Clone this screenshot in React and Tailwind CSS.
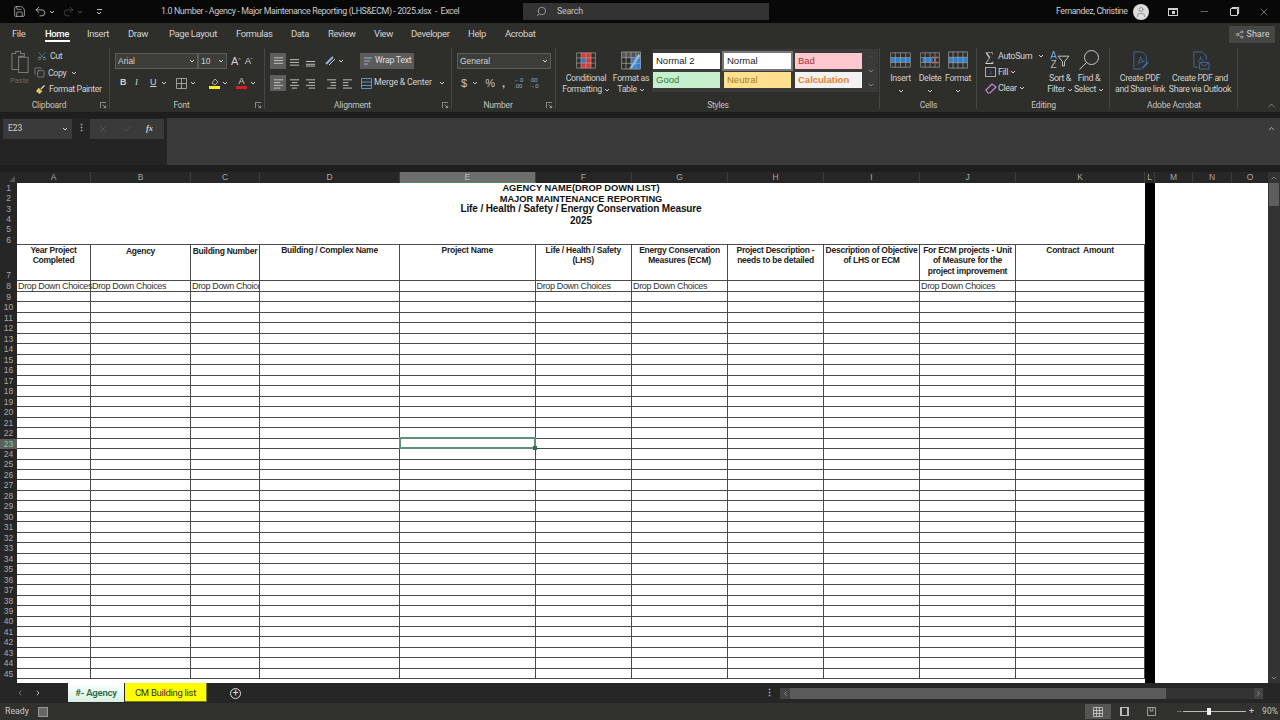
import React from "react";
import { Search, X, Minus, Scissors, Copy, ChevronDown, ChevronUp, ChevronLeft, ChevronRight, User, Share2, Save, Undo2, Redo2, Check } from "lucide-react";

const Caret = ({ c = "" }) => <svg viewBox="0 0 6 4" className={"w-[6px] h-[4px] shrink-0 " + c}><path d="M1 1l2 2 2-2" fill="none" stroke="currentColor" strokeWidth="1" /></svg>;
const Launcher = () => <svg viewBox="0 0 8 8" className="w-[7px] h-[7px] text-[#b8b8b8]"><path d="M.5 7V.5H7M3 3l3.5 3.5M6.5 4v2.5H4" fill="none" stroke="currentColor" strokeWidth=".8" /></svg>;

const Group = ({ w, label, launcher, children, noBorder }) => (
  <div className={`${w} h-[67px] shrink-0 flex flex-col relative`}>
    <div className="flex-1 min-h-0 flex">{children}</div>
    <div className={`h-[15px] flex items-center justify-center text-[8.5px] tracking-[-0.2px] text-[#c4c4c2] pt-[1px] ${launcher ? "pr-[12px]" : ""}`}>{label}</div>
    {launcher && <div className="absolute right-[3px] bottom-[3px]"><Launcher /></div>}
    {!noBorder && <div className="absolute right-0 top-[3px] bottom-[3px] w-px bg-[#454543]" />}
  </div>
);

const Lines = ({ rows, active }) => (
  <div className={`w-[16px] h-[16px] shrink-0 flex items-center justify-center ${active ? "bg-[#5e5e5c]" : ""}`}>
    <svg viewBox="0 0 12 12" className="w-[11px] h-[11px]">
      {rows.map((r, i) => <path key={i} d={`M${r[0]} ${r[2]}H${r[1]}`} stroke="#c8c8c8" strokeWidth="1" />)}
    </svg>
  </div>
);

const Tile = ({ cls, label, outer }) => (
  <div className={`w-[67px] h-[16px] shrink-0 flex items-center pl-[3px] text-[9.5px] font-['Liberation_Sans'] leading-none ${cls} ${outer || ""}`}>{label}</div>
);

const GridIcon = ({ children, w = 32, h = 20 }) => (
  <svg viewBox="0 0 32 20" width={w} height={h} preserveAspectRatio="none" className="shrink-0">
    {children}
    <path d="M1 1h30v18H1zM1 7h30M1 13h30M8 1v18M16 1v18M24 1v18" fill="none" stroke="#a8a8a8" strokeWidth=".9" />
  </svg>
);

const BigButton = ({ w, icon, l1, l2, caret1, caret2 }) => (
  <div className={`${w} shrink-0 flex flex-col items-center text-[8.8px] tracking-[-0.35px] leading-[11px] text-[#cfcfcd]`}>
    <div className="h-[20px] flex items-center justify-center">{icon}</div>
    <div className="mt-[3px] whitespace-nowrap flex items-center gap-[2px]">{l1}{caret1 && <Caret />}</div>
    <div className="whitespace-nowrap flex items-center gap-[2px] h-[11px]">{l2}{caret2 && <Caret />}</div>
  </div>
);

const cols = [74, 100, 69, 140, 135.5, 96.5, 96, 96, 96, 96, 129];
const colLetters = ["A", "B", "C", "D", "E", "F", "G", "H", "I", "J", "K"];
const headerText = [
  ["Year Project", "Completed"], ["Agency"], ["Building Number"], ["Building / Complex Name"], ["Project Name"],
  ["Life / Health / Safety", "(LHS)"], ["Energy Conservation", "Measures (ECM)"], ["Project Description -", "needs to be detailed"],
  ["Description of Objective", "of LHS or ECM"], ["For ECM projects - Unit", "of Measure for the", "project improvement"], ["Contract  Amount"],
];
const dd = { 0: 1, 1: 1, 2: 1, 5: 1, 6: 1, 9: 1 };
const tableCols = "grid grid-cols-[74px_100px_69px_140px_135.5px_96.5px_96px_96px_96px_96px_129px]";
const dataRows = Array.from({ length: 37 }, (_, i) => i + 9);
const sans = "font-['Liberation_Sans',Arial,sans-serif]";

export default function App() {
  return (
    <div className="w-[1280px] h-[720px] overflow-hidden flex flex-col bg-[#1f1f1f] text-[#d2d2d0] font-['Roboto','Noto_Sans',sans-serif]">
      {/* Title bar */}
      <div className="h-[23px] shrink-0 bg-[#080808] flex items-center">
        <div className="w-[161px] shrink-0 flex items-center pl-[13px] text-[#c8c8c8]">
          <Save size={13} strokeWidth={1.3} />
          <Undo2 size={13} strokeWidth={1.5} className="ml-[8px]" />
          <Caret c="ml-[2px]" />
          <Redo2 size={13} strokeWidth={1.3} className="ml-[7px] text-[#555]" />
          <Caret c="ml-[2px] text-[#555]" />
          <div className="ml-[13px] flex flex-col items-center gap-[1px]"><div className="w-[5px] h-px bg-[#bbb]" /><Caret /></div>
        </div>
        <div className="w-[362px] shrink-0 text-[8.9px] tracking-[-0.41px] whitespace-nowrap text-[#c9c9c9]">1.0 Number - Agency - Major Maintenance Reporting (LHS&amp;ECM) - 2025.xlsx&nbsp; -&nbsp; Excel</div>
        <div className="w-[246px] h-[17px] shrink-0 bg-[#333333] flex items-center pl-[13px] text-[8.8px] tracking-[-0.2px] text-[#c4c4c4]">
          <Search size={11} strokeWidth={1.4} className="-scale-x-100" />
          <span className="ml-[10px]">Search</span>
        </div>
        <div className="ml-[287px] text-[8.8px] tracking-[-0.4px] whitespace-nowrap w-[78px] shrink-0 text-[#cfcfcf]">Fernandez, Christine</div>
        <div className="w-[16px] h-[16px] shrink-0 rounded-full bg-[#dcdcdc] flex items-center justify-center ml-[-1px]"><User size={12} strokeWidth={1.4} className="text-[#777]" /></div>
        <div className="ml-[19px] w-[10px] h-[8px] border border-[#d0d0d0] border-t-2 flex items-center justify-center"><div className="w-[3px] h-[3px] bg-[#d0d0d0]" /></div>
        <Minus size={11} strokeWidth={1} className="ml-[21px]" />
        <div className="ml-[20px] w-[8px] h-[8px] border border-[#d0d0d0] rounded-[1px] shadow-[1.5px_-1.5px_0_-0.4px_#d0d0d0]" />
        <X size={12} strokeWidth={1.1} className="ml-[20px]" />
      </div>

      {/* Tabs */}
      <div className="h-[22px] shrink-0 bg-[#2e2e2b] flex items-center text-[9.5px] tracking-[-0.4px] pl-[12px] pt-[1px] relative">
        <span className="w-[33px]">File</span>
        <span className="w-[42px] text-white font-medium relative">Home<span className="absolute left-0 top-[13px] w-[25px] h-[2px] bg-white" /></span>
        <span className="w-[41px]">Insert</span>
        <span className="w-[41px]">Draw</span>
        <span className="w-[67px]">Page Layout</span>
        <span className="w-[55px]">Formulas</span>
        <span className="w-[37px]">Data</span>
        <span className="w-[46px]">Review</span>
        <span className="w-[37px]">View</span>
        <span className="w-[57px]">Developer</span>
        <span className="w-[37px]">Help</span>
        <span className="w-[40px]">Acrobat</span>
        <div className="ml-auto mr-[5px] w-[46px] h-[17px] bg-[#464644] flex items-center justify-center gap-[3px] text-[9px] tracking-normal rounded-[1px]">
          <Share2 size={9} strokeWidth={1.4} /><span>Share</span>
        </div>
      </div>

      {/* Ribbon */}
      <div className="h-[67px] shrink-0 bg-[#2e2e2b] flex">
        <Group w="w-[110px]" label="Clipboard" launcher>
          <div className="w-[32px] pl-[11px] pt-[5px] flex flex-col items-start text-[7.5px] text-[#6a6a68]">
            <svg viewBox="0 0 20 24" className="w-[19px] h-[24px]"><path d="M1 3h4V1h5v2h4v3H8v14H1zM8 7h10v16H8z" fill="none" stroke="#7a7a78" strokeWidth="1.1" /></svg>
            <span className="mt-[1px] ml-[-1px]">Paste</span>
          </div>
          <div className="flex-1 flex flex-col pt-[3px] pl-[2px] text-[8.8px] tracking-[-0.4px] leading-[16.5px]">
            <div className="flex items-center h-[16.5px] pl-[3px]"><Scissors size={10} strokeWidth={1.2} className="text-[#7fb0e0] -rotate-90" /><span className="ml-[3px]">Cut</span></div>
            <div className="flex items-center h-[16.5px]"><Copy size={11} strokeWidth={1} className="text-[#c8c8c8]" /><span className="ml-[3px]">Copy</span><Caret c="ml-[5px]" /></div>
            <div className="flex items-center h-[16.5px] pl-[1px]">
              <svg viewBox="0 0 12 12" className="w-[11px] h-[11px]"><path d="M1 8l3-4 4 4-3 3z" fill="#e8c25e" /><path d="M6 5l4-4 1 1-4 4z" fill="#dcdcdc" /></svg>
              <span className="ml-[3px] whitespace-nowrap">Format Painter</span>
            </div>
          </div>
        </Group>

        <Group w="w-[155px]" label="Font" launcher>
          <div className="pl-[5px] pt-[8px] flex flex-col">
            <div className="flex items-center text-[8.5px]">
              <div className="w-[83px] h-[16px] border border-[#5c5c5a] bg-[#3d3d3a] flex items-center justify-between px-[2px] font-['Liberation_Sans']">Arial<Caret /></div>
              <div className="w-[29px] h-[16px] border border-[#5c5c5a] bg-[#3d3d3a] flex items-center justify-between px-[2px] font-['Liberation_Sans']">10<Caret /></div>
              <span className="ml-[4px] text-[11px] font-['Liberation_Sans'] leading-none">A<sup className="text-[5px]">^</sup></span>
              <span className="ml-[4px] text-[9.5px] font-['Liberation_Sans'] leading-none">A<sup className="text-[5px]">ˇ</sup></span>
            </div>
            <div className="flex items-center mt-[6px] pl-[5px] text-[9px] h-[16px] font-['Liberation_Sans']">
              <span className="font-bold w-[15px]">B</span>
              <span className="italic w-[15px] font-['Liberation_Serif']">I</span>
              <span className="underline w-[11px]">U</span><Caret />
              <svg viewBox="0 0 11 11" className="w-[11px] h-[11px] ml-[9px]"><path d="M.5.5h10v10H.5zM5.5.5v10M.5 5.5h10" fill="none" stroke="#b8b8b8" strokeWidth=".8" /></svg>
              <Caret c="ml-[3px]" />
              <div className="ml-[13px] w-[11px] flex flex-col items-center"><svg viewBox="0 0 10 8" className="w-[10px] h-[8px]"><path d="M2 5l3-4 3 3-3 3z" fill="none" stroke="#ccc" strokeWidth=".8" /></svg><div className="w-[11px] h-[3px] bg-[#f4ee1a]" /></div>
              <Caret c="ml-[2px]" />
              <div className="ml-[8px] w-[11px] flex flex-col items-center text-[9px] leading-[8px]"><span>A</span><div className="w-[11px] h-[3px] bg-[#d81e1e] mt-[1px]" /></div>
              <Caret c="ml-[3px]" />
            </div>
          </div>
        </Group>

        <Group w="w-[187px]" label="Alignment" launcher>
          <div className="pl-[5px] pt-[8px] flex flex-col gap-[6px]">
            <div className="flex items-center h-[16px]">
              <Lines active rows={[[1, 11, 2], [1, 11, 5], [1, 11, 8]]} />
              <Lines rows={[[1, 11, 4], [1, 11, 7], [1, 11, 10]]} />
              <Lines rows={[[1, 11, 6], [1, 11, 9], [1, 11, 11]]} />
              <svg viewBox="0 0 12 12" className="w-[12px] h-[12px] ml-[6px] shrink-0"><path d="M2 9l7-7" stroke="#8fb3d9" strokeWidth="2" /><path d="M5 10l6-6" stroke="#cccccc" strokeWidth="1" /></svg>
              <Caret c="ml-[2px]" />
              <div className="ml-[16px] w-[54px] h-[16px] bg-[#5b5b59] flex items-center text-[8.8px] tracking-[-0.3px] pl-[3px] whitespace-nowrap text-[#dedede]">
                <svg viewBox="0 0 10 10" className="w-[10px] h-[10px] mr-[2px] shrink-0"><path d="M1 2h8M1 5h6M1 8h4" stroke="#8fb3d9" strokeWidth="1" /></svg>Wrap Text
              </div>
            </div>
            <div className="flex items-center h-[16px]">
              <Lines active rows={[[1, 11, 2], [1, 8, 5], [1, 11, 8], [1, 8, 11]]} />
              <Lines rows={[[1, 11, 2], [3, 9, 5], [1, 11, 8], [3, 9, 11]]} />
              <Lines rows={[[1, 11, 2], [4, 11, 5], [1, 11, 8], [4, 11, 11]]} />
              <div className="w-[5px] shrink-0" />
              <Lines rows={[[1, 11, 2], [5, 11, 5], [5, 11, 8], [1, 11, 11]]} />
              <Lines rows={[[1, 11, 2], [1, 7, 5], [1, 7, 8], [1, 11, 11]]} />
              <div className="w-[6px] shrink-0" />
              <div className="flex items-center text-[8.8px] tracking-[-0.2px] whitespace-nowrap">
                <svg viewBox="0 0 11 11" className="w-[11px] h-[11px] mr-[2px]"><path d="M.5.5h10v10H.5zM.5 4h10M.5 7.5h10" fill="none" stroke="#6d9ccc" strokeWidth=".9" /></svg>
                Merge &amp; Center<Caret c="ml-[7px]" />
              </div>
            </div>
          </div>
        </Group>

        <Group w="w-[104px]" label="Number" launcher>
          <div className="pl-[5px] pt-[8px] flex flex-col">
            <div className="w-[94px] h-[16px] border border-[#5c5c5a] bg-[#3d3d3a] flex items-center justify-between px-[2px] text-[8.5px] font-['Liberation_Sans']">General<Caret /></div>
            <div className="flex items-center mt-[6px] h-[16px] pl-[4px] text-[11px] text-[#c4c4c2] font-['Liberation_Sans']">
              <span>$</span><Caret c="ml-[5px]" />
              <span className="ml-[7px]">%</span>
              <span className="ml-[7px] font-bold">,</span>
              <span className="ml-[9px] text-[6px] leading-[6px] text-[#8fb3d9]">←0<br />.00</span>
              <span className="ml-[6px] text-[6px] leading-[6px] text-[#8fb3d9]">.00<br />→0</span>
            </div>
          </div>
        </Group>

        <Group w="w-[324px]" label="Styles">
          <div className="pl-[6px] pt-[5px]">
            <BigButton w="w-[48px]" l1="Conditional" l2="Formatting" caret2 icon={
              <GridIcon w={20} h={17}><rect x="8" y="1" width="16" height="6" fill="#d83b35" /><rect x="8" y="7" width="8" height="6" fill="#2f77c4" /><rect x="16" y="7" width="8" height="6" fill="#d83b35" /><rect x="8" y="13" width="16" height="6" fill="#d83b35" /></GridIcon>
            } />
          </div>
          <div className="pt-[5px]">
            <BigButton w="w-[42px]" l1="Format as" l2="Table" caret2 icon={
              <GridIcon w={20} h={19}><rect x="1" y="1" width="31" height="6" fill="#555" /><rect x="16" y="7" width="16" height="12" fill="#2f7fd0" /><path d="M12 19l4-3 12-13 3 2-13 13z" fill="#8fbde8" /></GridIcon>
            } />
          </div>
          <div className="mt-[4px] w-[226px] h-[43px] bg-[#3a3a38] flex pl-[1px] pt-[4px] text-[#222]">
            <div className="flex flex-col gap-[3px] w-[211px] shrink-0">
              <div className="flex gap-[4px]">
                <Tile cls="bg-white text-[#222]" label="Normal 2" />
                <Tile cls="bg-white text-[#222]" label="Normal" outer="outline outline-2 outline-[#777]" />
                <Tile cls="bg-[#ffc7ce] text-[#a8323f]" label="Bad" />
              </div>
              <div className="flex gap-[4px]">
                <Tile cls="bg-[#c6efce] text-[#2e7d32]" label="Good" />
                <Tile cls="bg-[#ffe08f] text-[#a5812c]" label="Neutral" />
                <Tile cls="bg-[#f2f2f2] text-[#e4832a] font-bold" label="Calculation" />
              </div>
            </div>
            <div className="flex-1 flex flex-col items-center gap-[6px] text-[#aaa]"><ChevronUp size={8} className="text-[#555]" /><ChevronDown size={8} /><ChevronDown size={8} /></div>
          </div>
        </Group>

        <Group w="w-[97px]" label="Cells">
          <div className="pl-[5px] pt-[5px] flex">
            <BigButton w="w-[31px]" l1="Insert" l2={<Caret c="mt-[3px]" />} icon={<GridIcon w={21} h={16}><rect x="1" y="7" width="30" height="6" fill="#2f7fd0" /></GridIcon>} />
            <BigButton w="w-[28px]" l1="Delete" l2={<Caret c="mt-[3px]" />} icon={<GridIcon w={20} h={16}><rect x="4" y="7" width="16" height="6" fill="#2f7fd0" /><path d="M20 5l8 10M28 5l-8 10" stroke="#d9534f" strokeWidth="1.4" /></GridIcon>} />
            <BigButton w="w-[28px]" l1="Format" l2={<Caret c="mt-[3px]" />} icon={<GridIcon w={20} h={18}><rect x="1" y="7" width="30" height="6" fill="#2f7fd0" /></GridIcon>} />
          </div>
        </Group>

        <Group w="w-[133px]" label="Editing">
          <div className="pl-[8px] pt-[3px] w-[70px] flex flex-col text-[9px] tracking-[-0.4px] leading-[16px] shrink-0">
            <div className="flex items-center whitespace-nowrap"><span className="text-[13px] w-[12px] shrink-0 font-['Liberation_Serif'] leading-none">∑</span><span className="ml-[1px]">AutoSum</span><Caret c="ml-[6px]" /></div>
            <div className="flex items-center"><div className="w-[11px] h-[10px] shrink-0 border border-[#aaa] flex items-center justify-center text-[#5fa0e0] text-[7px] leading-none">↓</div><span className="ml-[2px]">Fill</span><Caret c="ml-[2px]" /></div>
            <div className="flex items-center"><svg viewBox="0 0 12 12" className="w-[12px] h-[12px] shrink-0"><path d="M1 8l6-6 4 3-6 6H3z" fill="none" stroke="#c78ad8" strokeWidth="1.2" /></svg><span className="ml-[1px]">Clear</span><Caret c="ml-[2px]" /></div>
          </div>
          <div className="pt-[5px]">
            <BigButton w="w-[26px]" l1="Sort &" l2="Filter" caret2 icon={
              <span className="flex items-center text-[10px] leading-[9px] font-['Liberation_Sans'] text-[#b8b8b8]"><span className="text-center"><span className="text-[#6ba5de]">A</span><br />Z</span><svg viewBox="0 0 12 12" className="w-[13px] h-[13px]"><path d="M1 2h10L7 7v4H5V7z" fill="none" stroke="#c8c8c8" strokeWidth=".9" /></svg></span>
            } />
          </div>
          <div className="pt-[5px]">
            <BigButton w="w-[32px]" l1="Find &" l2="Select" caret2 icon={<svg viewBox="0 0 22 22" className="w-[22px] h-[22px]"><circle cx="13.5" cy="8.5" r="7" fill="none" stroke="#c8c8c8" strokeWidth="1" /><path d="M8.5 13.5L1.5 20.5" stroke="#c8c8c8" strokeWidth="1" /></svg>} />
          </div>
        </Group>

        <Group w="w-[128px]" label="Adobe Acrobat">
          <div className="pl-[5px] pt-[5px] flex gap-[6px]">
            <BigButton w="w-[50px]" l1="Create PDF" l2="and Share link" icon={<svg viewBox="0 0 20 20" className="w-[19px] h-[19px]"><path d="M3 1h9l4 4v8M3 1v18h8M7 12c2-1 3-4 3-6 0 3 2 5 4 5-2 0-5 1-7 3" fill="none" stroke="#3f6ca8" strokeWidth="1" /><path d="M12 18l6-6" stroke="#3f6ca8" strokeWidth="2" /></svg>} />
            <BigButton w="w-[58px]" l1="Create PDF and" l2="Share via Outlook" icon={<svg viewBox="0 0 20 20" className="w-[19px] h-[19px]"><path d="M3 1h9l4 4v5M3 1v16h5M7 11c2-1 3-3 3-5 0 2 1 4 3 4" fill="none" stroke="#3f6ca8" strokeWidth="1" /><path d="M9 12h10v7H9zM9 12l5 4 5-4" fill="none" stroke="#3f6ca8" strokeWidth="1" /></svg>} />
          </div>
        </Group>
        <div className="flex-1 flex items-end justify-end pr-[3px] pb-[1px]"><ChevronUp size={11} strokeWidth={1.2} className="text-[#bbb]" /></div>
      </div>

      {/* Gap */}
      <div className="h-[6px] shrink-0 bg-[#1e1e1e]" />

      {/* Formula bar */}
      <div className="h-[47px] shrink-0 flex bg-[#242424]">
        <div className="w-[167px] shrink-0 h-[21px] flex items-center pl-[3px]">
          <div className="w-[69px] h-[20px] bg-[#3a3a3a] flex items-center justify-between pl-[5px] pr-[4px] text-[8.5px]">E23<Caret /></div>
          <span className="w-[18px] text-center text-[9px] font-bold leading-none text-[#bbb]">⋮</span>
          <div className="w-[74px] h-[20px] bg-[#3a3a3a] flex items-center">
            <X size={10} strokeWidth={1.3} className="ml-[8px] text-[#666]" />
            <Check size={10} strokeWidth={1.3} className="ml-[14px] text-[#666]" />
            <span className="ml-[14px] text-[8.5px] italic font-bold font-['Liberation_Serif'] text-[#ccc]">fx</span>
          </div>
        </div>
        <div className="flex-1 bg-[#3a3a3a] flex justify-end pr-[4px] pt-[6px]"><ChevronUp size={9} strokeWidth={2} className="text-[#ccc]" /></div>
      </div>

      <div className="h-[7px] shrink-0 bg-[#1e1e1e]" />

      {/* Column header */}
      <div className="h-[11px] shrink-0 flex bg-[#262626] text-[8.5px] text-[#a8a8a8] font-['Liberation_Sans'] leading-none">
        <div className="w-[17px] shrink-0 flex items-end justify-end pr-[2px] pb-[1px]"><div className="w-0 h-0 border-l-[6px] border-l-transparent border-b-[6px] border-b-[#555]" /></div>
        <div className={`${tableCols} w-[1128px] shrink-0`}>
          {colLetters.map((c) => (
            <div key={c} className={`flex items-center justify-center border-r border-[#3c3c3c] ${c === "E" ? "bg-[#6e6e6e] border-b border-b-[#4d8a6a] text-[#bbb]" : ""}`}>{c}</div>
          ))}
        </div>
        <div className="w-[10px] shrink-0 flex items-center justify-center border-r border-[#3c3c3c]">L</div>
        <div className="w-[38px] shrink-0 flex items-center justify-center border-r border-[#3c3c3c]">M</div>
        <div className="w-[39px] shrink-0 flex items-center justify-center border-r border-[#3c3c3c]">N</div>
        <div className="w-[36px] shrink-0 flex items-center justify-center">O</div>
        <div className="flex-1 bg-[#333] flex items-center justify-center"><ChevronUp size={8} strokeWidth={2} /></div>
      </div>

      {/* Sheet */}
      <div className="h-[500px] shrink-0 flex overflow-hidden">
        <div className="w-[17px] shrink-0 bg-[#262626] text-[8.5px] text-[#a8a8a8] font-['Liberation_Sans'] leading-none flex flex-col">
          {[1, 2, 3, 4, 5, 6].map((n) => <div key={n} className="h-[10.33px] shrink-0 flex items-center justify-center">{n}</div>)}
          <div className="h-[36px] shrink-0 flex items-end justify-center pb-[1px]">7</div>
          <div className="h-[11px] shrink-0 flex items-center justify-center">8</div>
          {dataRows.map((n) => <div key={n} className={`h-[10.47px] shrink-0 flex items-center justify-center ${n === 23 ? "bg-[#5e5e5e] text-[#7fd0aa]" : ""}`}>{n}</div>)}
        </div>
        <div className={`w-[1128px] shrink-0 bg-white text-[#1a1a1a] ${sans}`}>
          <div className="h-[62px] border-b border-[#4a4a4a] flex flex-col items-center font-bold text-[10px] leading-[10.5px] text-[#111]">
            <div className="text-[9.3px]">AGENCY NAME(DROP DOWN LIST)</div>
            <div className="text-[9.3px]">MAJOR MAINTENANCE REPORTING</div>
            <div className="tracking-[-0.12px]">Life / Health / Safety / Energy Conservation Measure</div>
            <div className="mt-[1px]">2025</div>
          </div>
          <div className={`${tableCols} h-[36px] border-b border-[#4a4a4a]`}>
            {headerText.map((lines, i) => (
              <div key={i} className={`border-r border-[#4a4a4a] text-center font-bold text-[8.5px] tracking-[-0.25px] leading-[10.4px] text-[#222] whitespace-nowrap ${i > 0 && i < 3 ? "pt-[1px]" : ""}`}>
                {lines.map((l, j) => <div key={j} className="whitespace-pre">{l}</div>)}
              </div>
            ))}
          </div>
          <div className={`${tableCols} h-[11px] border-b border-[#4a4a4a]`}>
            {cols.map((_, i) => (
              <div key={i} className={`border-r border-[#4a4a4a] text-[9px] tracking-[-0.35px] leading-[10px] pl-[1px] whitespace-nowrap text-[#333] ${i === 2 ? "overflow-hidden" : ""}`}>{dd[i] ? "Drop Down Choices" : ""}</div>
            ))}
          </div>
          {dataRows.map((n) => (
            <div key={n} className={`${tableCols} h-[10.47px] ${n < 46 ? "border-b border-[#4a4a4a]" : ""}`}>
              {cols.map((_, i) => (
                <div key={i} className={`relative ${n < 46 ? "border-r border-[#4a4a4a]" : ""}`}>
                  {n === 23 && i === 4 && (
                    <div className="absolute -left-px -top-[2px] -right-px -bottom-px border-2 border-[#5f9078] z-10">
                      <div className="absolute -right-[3px] -bottom-[3px] w-[4px] h-[4px] bg-[#2f6b50]" />
                    </div>
                  )}
                </div>
              ))}
            </div>
          ))}
        </div>
        <div className="w-[10px] shrink-0 bg-black" />
        <div className="w-[113px] shrink-0 bg-white" />
        <div className="flex-1 bg-[#333] flex flex-col items-center">
          <div className="w-[10px] h-[23px] bg-[#5e5e5e] shrink-0" />
          <div className="flex-1" />
          <ChevronDown size={8} strokeWidth={2} className="mb-[1px] text-[#aaa]" />
        </div>
      </div>

      {/* Sheet tabs */}
      <div className="h-[20px] shrink-0 bg-[#262626] flex items-center relative">
        <div className="w-[68px] flex pl-[16px] gap-[10px] text-[#bbb] shrink-0"><ChevronLeft size={8} strokeWidth={3} className="text-[#777]" /><ChevronRight size={8} strokeWidth={3} /></div>
        <div className="w-[56px] h-[19px] self-start pt-[2px] bg-gradient-to-b from-white to-[#d9efe3] text-[#1f6b45] font-semibold text-[9.5px] tracking-[-0.2px] flex items-center justify-center shrink-0">#- Agency</div>
        <div className="ml-[1px] w-[82px] h-[19px] self-start pt-[2px] bg-[#fdfd00] text-[#333] text-[9.5px] tracking-[-0.3px] flex items-center justify-center shrink-0 border-r border-b border-[#7a7a20]">CM Building list</div>
        <div className="ml-[23px] w-[11px] h-[11px] rounded-full border border-[#ddd] flex items-center justify-center text-[10px] leading-none text-[#ddd] shrink-0">+</div>
        <div className="ml-[523px] w-[11px] text-center text-[9px] font-bold leading-none text-[#bbb] shrink-0">⋮</div>
        <div className="ml-[5px] w-[483px] h-[11px] bg-[#333] flex shrink-0">
          <div className="w-[10px] flex items-center justify-center bg-[#444]"><ChevronLeft size={7} strokeWidth={3} className="text-[#999]" /></div>
          <div className="w-[376px] bg-[#5a5a5a]" />
          <div className="flex-1 flex justify-end"><div className="w-[9px] flex items-center justify-center bg-[#444]"><ChevronRight size={7} strokeWidth={3} className="text-[#999]" /></div></div>
        </div>
      </div>

      {/* Status */}
      <div className="flex-1 bg-[#31312e] flex items-center text-[8.8px] text-[#c8c8c6] pl-[5px]">
        <span className="w-[33px]">Ready</span>
        <div className="w-[10px] h-[10px] bg-[#666] border border-[#999]" />
        <div className="ml-[1037px] w-[26px] h-[15px] bg-[#555553] flex items-center justify-center">
          <svg viewBox="0 0 10 10" className="w-[10px] h-[10px]"><path d="M.5.5h9v9h-9zM3.5.5v9M6.5.5v9M.5 3.5h9M.5 6.5h9" fill="none" stroke="#e0e0e0" strokeWidth=".7" /></svg>
        </div>
        <div className="w-[27px] flex justify-center"><div className="w-[9px] h-[9px] border border-[#bbb] border-x-2" /></div>
        <div className="w-[27px] flex justify-center"><svg viewBox="0 0 10 10" className="w-[9px] h-[9px]"><path d="M.5.5h9v9h-9zM3.5.5v4h3v-4" fill="none" stroke="#ccc" strokeWidth=".8" /></svg></div>
        <Minus size={7} strokeWidth={1.5} className="ml-[11px]" />
        <div className="w-[63px] h-px bg-[#bbb] relative"><div className="absolute left-[24px] -top-[3px] w-[4px] h-[7px] bg-[#eee]" /></div>
        <span className="ml-[3px] text-[9px] leading-none">+</span>
        <span className="ml-[8px] text-[8.5px]">90%</span>
      </div>
    </div>
  );
}
